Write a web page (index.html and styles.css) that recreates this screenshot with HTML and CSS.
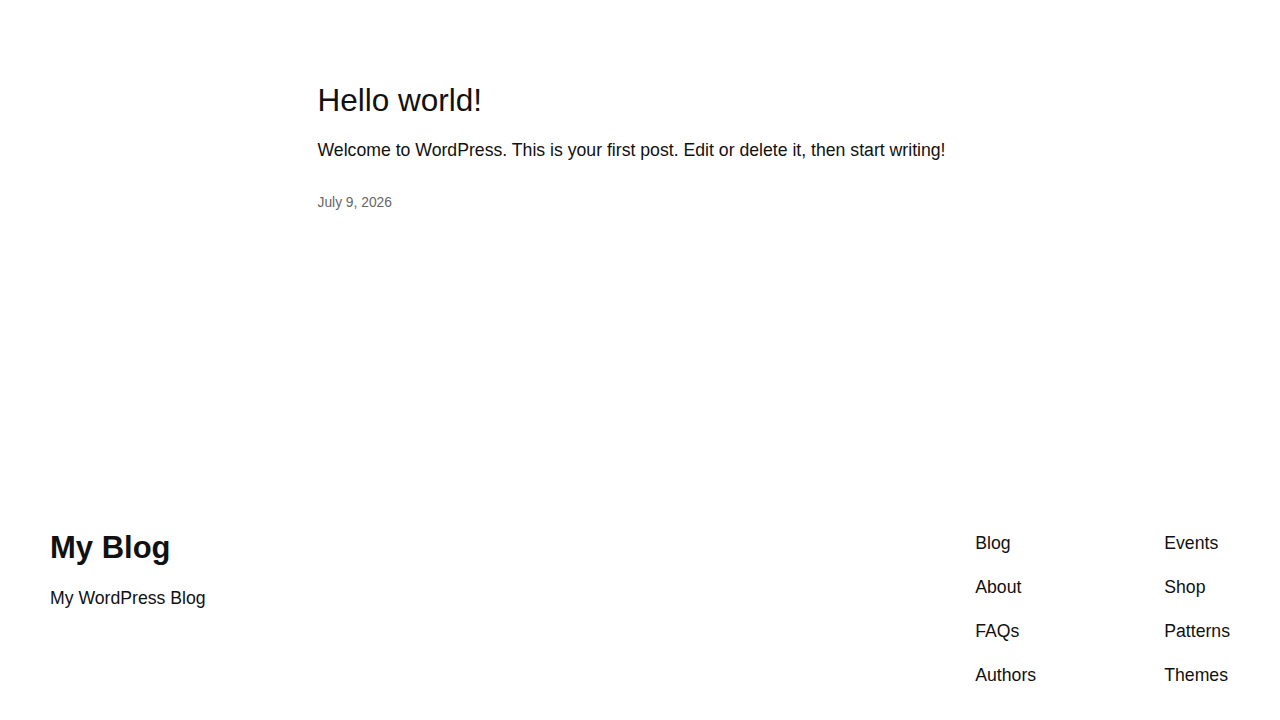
FILE: index.html
```html
<!DOCTYPE html>
<html lang="en">
<head>
    <meta charset="UTF-8">
    <meta name="viewport" content="width=device-width, initial-scale=1.0">
    <title>My Blog</title>
    <link rel="stylesheet" href="styles.css">
</head>
<body>
    <main class="site-main">
        <article class="post">
            <h2 class="post-title">Hello world!</h2>
            <p class="post-excerpt">Welcome to WordPress. This is your first post. Edit or delete it, then start writing!</p>
            <div class="post-date">July 9, 2026</div>
        </article>
    </main>

    <footer class="site-footer">
        <div class="footer-brand">
            <h1 class="site-title">My Blog</h1>
            <p class="site-tagline">My WordPress Blog</p>
        </div>
        <nav class="footer-nav">
            <ul class="nav-col nav-col-first">
                <li>Blog</li>
                <li>About</li>
                <li>FAQs</li>
                <li>Authors</li>
            </ul>
            <ul class="nav-col">
                <li>Events</li>
                <li>Shop</li>
                <li>Patterns</li>
                <li>Themes</li>
            </ul>
        </nav>
    </footer>
</body>
</html>
```

FILE: styles.css
```css
* {
    margin: 0;
    padding: 0;
    box-sizing: border-box;
}
body {
    background-color: #fff;
    color: #111;
    font-family: "Liberation Sans", Arial, sans-serif;
    font-size: 17.66px;
    line-height: 1.6;
}
.site-main {
    height: 529px;
    padding-top: 82px;
}
.post {
    width: 645px;
    margin: 0 auto;
}
.post-title {
    font-size: 31.5px;
    font-weight: 400;
    line-height: 36px;
}
.post-excerpt {
    margin-top: 18px;
}
.post-date {
    margin-top: 28px;
    font-size: 13.8px;
    color: #666;
}
.site-footer {
    display: flex;
    justify-content: space-between;
    padding: 0 50px 20px;
}
.site-title {
    padding-top: 1px;
    font-size: 31px;
    font-weight: 700;
    line-height: 36px;
}
.site-tagline {
    margin-top: 18px;
}
.footer-nav {
    display: flex;
}
.nav-col {
    list-style: none;
    display: flex;
    flex-direction: column;
    gap: 15.7px;
}
.nav-col-first {
    width: 189px;
}
```
